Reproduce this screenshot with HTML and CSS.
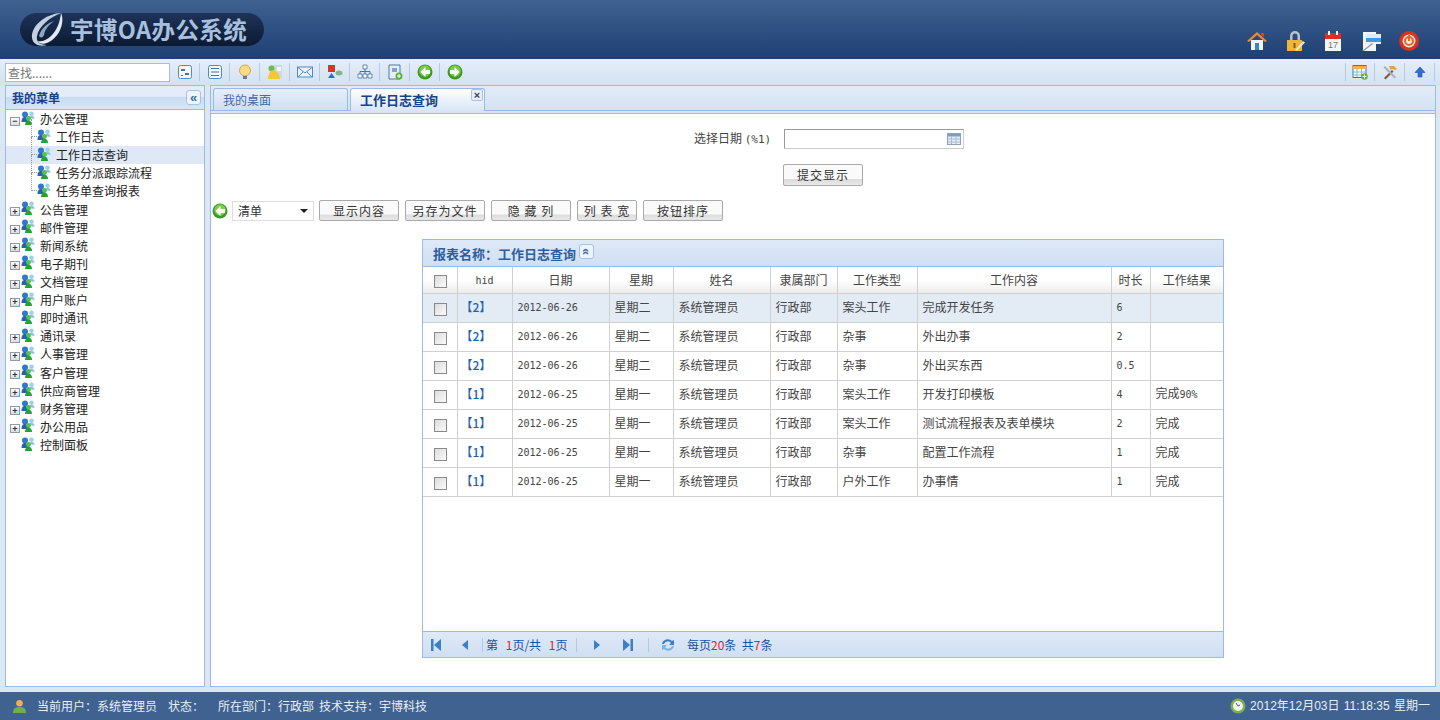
FILE: index.html
```html
<!DOCTYPE html>
<html>
	<head>
		<meta charset="UTF-8">
		<title>宇博OA办公系统</title>
		<link rel="stylesheet" href="styles.css">
	</head>
	<body>
		<svg class="defs" xmlns="http://www.w3.org/2000/svg">
			<symbol id="node" viewBox="0 0 14 14"><circle cx="4" cy="3.500" r="3" fill="#2f78cc"/><path d="M.5 11c0-4 1.500-5 3.500-5s3 1.500 3 5z" fill="#2a62ad"/><circle cx="10.500" cy="2.800" r="2.300" fill="#9fd0ea"/><path d="M8 7c0-1.500 1.500-2 3-2s2.500 1 2.500 3z" fill="#8cc2de"/><circle cx="7.500" cy="7.500" r="2.400" fill="#52c44a"/><path d="M4 14c0-3 1.700-4.500 3.500-4.500S11 11 11 14z" fill="#25a236"/></symbol>
			<symbol id="back" viewBox="0 0 16 16"><circle cx="8" cy="8" r="7.500" fill="#3b9a22"/><circle cx="8" cy="7" r="5.800" fill="#7ccb4f"/><path d="M8.500 3 3.500 8l5 5v-3H13V6H8.500z" fill="#fff"/></symbol>
			<symbol id="forward" viewBox="0 0 16 16"><circle cx="8" cy="8" r="7.500" fill="#3b9a22"/><circle cx="8" cy="7" r="5.800" fill="#7ccb4f"/><path d="M7.500 3 12.500 8l-5 5v-3H3V6h4.500z" fill="#fff"/></symbol>
		</svg>

		<div class="header">
			<div class="logo">
				<svg class="logo-mark" viewBox="0 0 34 36"><path d="M31 1C15 2 1 14 2 26c1 7 8 9 15 7-8 0-11-4-10-9C9 14 19 6 31 1z" fill="#c3d0e1"/><path d="M31 1c4 9-1 23-12 29-5 3-10 2-11-1 4 1 9-1 13-5C27 18 30 10 31 1z" fill="#e2e9f2"/><path d="M9 24c2-8 9-13 15-15-5 4-9 8-10 14-1 3-4 3-5 1z" fill="#8fa6c3"/></svg>
				<span class="logo-text">宇博OA办公系统</span>
			</div>
			<div class="top-icons">
				<svg viewBox="0 0 22 22"><path d="M5 10h12v10H5z" fill="#f1f4f8"/><path d="M9 13h4v7H9z" fill="#3d82cc"/><path d="M1 11 11 2l10 9-2 1-8-7-8 7z" fill="#ee8a2c"/><path d="M15 3h3v4l-3-2z" fill="#d8432b"/></svg>
				<svg viewBox="0 0 22 22"><path d="M6 10V6a5 5 0 0 1 10 0v4h-2.500V6a2.500 2.500 0 0 0-5 0v4z" fill="#b8c2cc"/><path d="M3 10h15v11H3z" fill="#efb43c"/><path d="M9.500 13h2v5h-2z" fill="#8a5a12"/><path d="M11 20l8-9 2 1.500L13 21z" fill="#f4e3c0"/></svg>
				<svg viewBox="0 0 22 22"><path d="M3 3h16v18H3z" fill="#f5f5f5"/><path d="M3 3h16v6H3z" fill="#dc2f25"/><path d="M6 1h2v4H6zM14 1h2v4h-2z" fill="#fff"/><text x="11" y="18" class="cal">17</text></svg>
				<svg viewBox="0 0 22 22"><path d="M3 2h13v19H3z" fill="#f2f5f9"/><path d="M6 4h15v4H6z" fill="#dfeaf5"/><path d="M6 8h15v4H6z" fill="#3f9ae0"/><path d="M6 12h15v2H6z" fill="#e8f1f9"/><path d="M2 21 12 13l1 1L4 21z" fill="#8d9aa8"/></svg>
				<svg viewBox="0 0 22 22"><circle cx="11" cy="11" r="10" fill="#d9321f"/><circle cx="11" cy="11" r="6.500" fill="#f6e7da"/><circle cx="11" cy="11" r="4" fill="none" stroke="#e2682a" stroke-width="2"/><path d="M10 5h2v6h-2z" fill="#e2682a"/></svg>
			</div>
		</div>

		<div class="toolbar">
			<input class="search" type="text" value="查找......">
			<div class="tool-group">
				<span class="tool"><svg viewBox="0 0 16 16"><rect x="1.500" y="1.500" width="13" height="13" rx="2" fill="#f3f8fd" stroke="#4d8cc8"/><path d="M4 5h4v2H4zM8 9h4v2H8zM4 11h2v1H4z" fill="#3c77b4"/></svg></span>
				<span class="tool"><svg viewBox="0 0 16 16"><rect x="1.500" y="1.500" width="13" height="13" rx="2" fill="#f3f8fd" stroke="#4d8cc8"/><path d="M4 4h8v1H4zM4 7.500h8v1H4zM4 11h8v1H4z" fill="#3c77b4"/></svg></span>
				<span class="tool"><svg viewBox="0 0 16 16"><circle cx="8" cy="6.500" r="5.500" fill="#f8dc85" stroke="#d9a441"/><path d="M6 12h4v3H6z" fill="#6e7b87"/></svg></span>
				<span class="tool"><svg viewBox="0 0 16 16"><path d="M4 1h11v13H4z" fill="#c9dbe9"/><path d="M10 3h4v4h-4z" fill="#f2f6fa"/><circle cx="4.500" cy="4.500" r="3" fill="#6dbb4c"/><path d="M4 7c3-2 8 0 9 8H1c0-3 1-6 3-8z" fill="#f2c92f"/></svg></span>
				<span class="tool"><svg viewBox="0 0 16 16"><rect x=".500" y="3" width="15" height="10" fill="#eaf3fb" stroke="#4d8cc8"/><path d="M1 3.500 8 9l7-5.500M1 13l5-5M15 13l-5-5" fill="none" stroke="#4d8cc8"/></svg></span>
				<span class="tool"><svg viewBox="0 0 16 16"><path d="M1 1h7v7H1z" fill="#cf3a2b"/><ellipse cx="12" cy="9" rx="3.500" ry="2.500" fill="#7fb98a"/><path d="M4.500 9 8 14H1z" fill="#2f6fd0"/></svg></span>
				<span class="tool"><svg viewBox="0 0 16 16"><path d="M6 1h4v4H6zM1 10h4v4H1zM6 10h4v4H6zM11 10h4v4h-4z" fill="#f4f7fa" stroke="#4472a8" stroke-width=".8"/><path d="M8 5v5M3 10V7.500h10V10" fill="none" stroke="#4472a8"/></svg></span>
				<span class="tool"><svg viewBox="0 0 16 16"><path d="M2 1h11v14H2z" fill="#e8eef4" stroke="#4f7a9e"/><path d="M5 4h5v4H5z" fill="#7ea7c9"/><circle cx="12" cy="12" r="3.500" fill="#5cb03a"/><path d="M11.500 10h1v1.500H14v1h-1.500V14h-1v-1.500H10v-1h1.500z" fill="#fff"/></svg></span>
				<span class="tool"><svg><use href="#back"/></svg></span>
				<span class="tool"><svg><use href="#forward"/></svg></span>
			</div>
			<div class="tool-group tool-right">
				<span class="tool"><svg viewBox="0 0 16 16"><rect x="1" y="1.500" width="13" height="12" fill="#fff" stroke="#3c77b4"/><path d="M1 2h13v3H1z" fill="#f0b24a"/><path d="M1 8h13M1 11h13M5 5v8M9.500 5v8" stroke="#8fb0cf" fill="none"/><circle cx="12.500" cy="12.500" r="3.200" fill="#5cb03a"/><path d="M12 10.500h1V12h1.500v1H13v1.500h-1V13h-1.500v-1H12z" fill="#fff"/></svg></span>
				<span class="tool"><svg viewBox="0 0 16 16"><path d="m2 14 8-8 1.500 1.500-8 8z" fill="#7a5a3a"/><path d="M7 2h5l3 3-2 1-3-1-1.500 1z" fill="#e8a13a"/><path d="m3 2 11 11-1.500 1.500L1.500 3.500z" fill="#a9b1ba"/></svg></span>
				<span class="tool"><svg viewBox="0 0 16 16"><path d="M8 3 13 8.500H10V13H6V8.500H3z" fill="#2f6fd0" stroke="#1f4f9e" stroke-width=".6"/></svg></span>
				<i class="tool-end"></i>
			</div>
		</div>

		<div class="main">
			<div class="side">
				<div class="side-title"><span>我的菜单</span><i class="collapse">«</i></div>
				<ul class="tree">
					<li><i class="exp">−</i><svg class="node"><use href="#node"/></svg>办公管理</li>
					<li class="sub"><i class="dots"></i><svg class="node"><use href="#node"/></svg>工作日志</li>
					<li class="sub on"><i class="dots"></i><svg class="node"><use href="#node"/></svg>工作日志查询</li>
					<li class="sub"><i class="dots"></i><svg class="node"><use href="#node"/></svg>任务分派跟踪流程</li>
					<li class="sub"><i class="dots"></i><svg class="node"><use href="#node"/></svg>任务单查询报表</li>
					<li><i class="exp">+</i><svg class="node"><use href="#node"/></svg>公告管理</li>
					<li><i class="exp">+</i><svg class="node"><use href="#node"/></svg>邮件管理</li>
					<li><i class="exp">+</i><svg class="node"><use href="#node"/></svg>新闻系统</li>
					<li><i class="exp">+</i><svg class="node"><use href="#node"/></svg>电子期刊</li>
					<li><i class="exp">+</i><svg class="node"><use href="#node"/></svg>文档管理</li>
					<li><i class="exp">+</i><svg class="node"><use href="#node"/></svg>用户账户</li>
					<li><i class="leaf"></i><svg class="node"><use href="#node"/></svg>即时通讯</li>
					<li><i class="exp">+</i><svg class="node"><use href="#node"/></svg>通讯录</li>
					<li><i class="exp">+</i><svg class="node"><use href="#node"/></svg>人事管理</li>
					<li><i class="exp">+</i><svg class="node"><use href="#node"/></svg>客户管理</li>
					<li><i class="exp">+</i><svg class="node"><use href="#node"/></svg>供应商管理</li>
					<li><i class="exp">+</i><svg class="node"><use href="#node"/></svg>财务管理</li>
					<li><i class="exp">+</i><svg class="node"><use href="#node"/></svg>办公用品</li>
					<li><i class="leaf"></i><svg class="node"><use href="#node"/></svg>控制面板</li>
				</ul>
			</div>

			<div class="content">
				<div class="tabs">
					<div class="tab">我的桌面</div>
					<div class="tab tab-on">工作日志查询<i class="tab-close">×</i></div>
				</div>
				<div class="tab-strip"></div>
				<div class="page">
					<div class="form-row">
						<label>选择日期 <span class="mono">(%1)</span></label>
						<div class="date-box">
							<input type="text">
							<svg viewBox="0 0 14 14"><rect x=".500" y="1.500" width="13" height="11" fill="#e4edf6" stroke="#8aa4c0"/><path d="M1 2h12v2.500H1z" fill="#7e9cc0"/><path d="M1 7h12M1 10h12M4.500 4v8M9 4v8" stroke="#a8bdd2"/></svg>
						</div>
					</div>
					<div class="submit-row"><button class="btn btn-wide">提交显示</button></div>
					<div class="action-row">
						<svg class="back"><use href="#back"/></svg>
						<div class="select"><span>清单</span><i class="arrow"></i></div>
						<button class="btn">显示内容</button>
						<button class="btn">另存为文件</button>
						<button class="btn">隐 藏 列</button>
						<button class="btn btn-short">列 表 宽</button>
						<button class="btn">按钮排序</button>
					</div>

					<div class="report">
						<div class="report-title">报表名称：工作日志查询<i class="collapse up">«</i></div>
						<div class="report-body">
							<table>
								<colgroup>
									<col class="c1"><col class="c2"><col class="c3"><col class="c4"><col class="c5"><col class="c6"><col class="c7"><col class="c8"><col class="c9"><col class="c10">
								</colgroup>
								<thead>
									<tr><th class="mid"><i class="check"></i></th><th><span class="mono">hid</span></th><th>日期</th><th>星期</th><th>姓名</th><th>隶属部门</th><th>工作类型</th><th>工作内容</th><th>时长</th><th>工作结果</th></tr>
								</thead>
								<tbody>
									<tr class="hot"><td class="mid"><i class="check"></i></td><td class="hid">【2】</td><td class="mono">2012-06-26</td><td>星期二</td><td>系统管理员</td><td>行政部</td><td>案头工作</td><td>完成开发任务</td><td class="mono">6</td><td></td></tr>
									<tr><td class="mid"><i class="check"></i></td><td class="hid">【2】</td><td class="mono">2012-06-26</td><td>星期二</td><td>系统管理员</td><td>行政部</td><td>杂事</td><td>外出办事</td><td class="mono">2</td><td></td></tr>
									<tr><td class="mid"><i class="check"></i></td><td class="hid">【2】</td><td class="mono">2012-06-26</td><td>星期二</td><td>系统管理员</td><td>行政部</td><td>杂事</td><td>外出买东西</td><td class="mono">0.5</td><td></td></tr>
									<tr><td class="mid"><i class="check"></i></td><td class="hid">【1】</td><td class="mono">2012-06-25</td><td>星期一</td><td>系统管理员</td><td>行政部</td><td>案头工作</td><td>开发打印模板</td><td class="mono">4</td><td>完成<span class="mono">90%</span></td></tr>
									<tr><td class="mid"><i class="check"></i></td><td class="hid">【1】</td><td class="mono">2012-06-25</td><td>星期一</td><td>系统管理员</td><td>行政部</td><td>案头工作</td><td>测试流程报表及表单模块</td><td class="mono">2</td><td>完成</td></tr>
									<tr><td class="mid"><i class="check"></i></td><td class="hid">【1】</td><td class="mono">2012-06-25</td><td>星期一</td><td>系统管理员</td><td>行政部</td><td>杂事</td><td>配置工作流程</td><td class="mono">1</td><td>完成</td></tr>
									<tr><td class="mid"><i class="check"></i></td><td class="hid">【1】</td><td class="mono">2012-06-25</td><td>星期一</td><td>系统管理员</td><td>行政部</td><td>户外工作</td><td>办事情</td><td class="mono">1</td><td>完成</td></tr>
								</tbody>
							</table>
						</div>
						<div class="pager">
							<svg viewBox="0 0 14 14"><path d="M2 1h2.500v12H2z" fill="#3b7fc6"/><path d="M12 1v12L5 7z" fill="#3b7fc6"/></svg>
							<svg class="gap" viewBox="0 0 14 14"><path d="M10 2v10L4 7z" fill="#3b7fc6"/></svg>
							<i class="sep sep-first"></i>
							<span class="page-text">第 <b>1</b>页/共 <b>1</b>页</span>
							<i class="sep"></i>
							<svg class="gap2" viewBox="0 0 14 14"><path d="M4 2v10l6-5z" fill="#3b7fc6"/></svg>
							<svg class="gap3" viewBox="0 0 14 14"><path d="M2 1v12l7-6z" fill="#3b7fc6"/><path d="M9.500 1H12v12H9.500z" fill="#3b7fc6"/></svg>
							<i class="sep sep-far"></i>
							<svg class="refresh" viewBox="0 0 16 16"><path d="M2 7a6 6 0 0 1 10-3l2-1v5H9l2-2a4 4 0 0 0-7 1z" fill="#3b7fc6"/><path d="M14 9a6 6 0 0 1-10 3l-2 1V8h5l-2 2a4 4 0 0 0 7-1z" fill="#7fb2e2"/></svg>
							<span class="page-count">每页<b>20</b>条&nbsp; 共<b>7</b>条</span>
						</div>
					</div>
				</div>
			</div>
		</div>

		<div class="footer">
			<svg class="user" viewBox="0 0 16 16"><circle cx="8" cy="4.500" r="3.500" fill="#f2b04a"/><path d="M1 15c0-5 3-6.500 7-6.500S15 10 15 15z" fill="#6fb04a"/></svg>
			<span class="foot-text">当前用户：系统管理员</span>
			<span class="foot-state">状态：</span>
			<span class="foot-dept">所在部门：行政部</span>
			<span class="foot-tech">技术支持：宇博科技</span>
			<div class="clock">
				<svg viewBox="0 0 16 16"><circle cx="8" cy="8" r="7.500" fill="#7fae52"/><circle cx="8" cy="8" r="5" fill="#f0f3ee"/><path d="M8 8 6 5M8 8l2-1" stroke="#555" fill="none"/></svg>
				<span class="time">2012年12月03日 11:18:35 星期一</span>
			</div>
		</div>
	</body>
</html>
```

FILE: styles.css
```css
* {margin: 0;padding: 0;border: none;box-sizing: border-box;}
ul,li {list-style: none;}
i {font-style: normal;}
body {
	width: 1440px;
	height: 720px;
	overflow: hidden;
	display: flex;
	flex-direction: column;
	background: #dce7f5;
	font: 12px/18px "Noto Sans CJK SC", sans-serif;
	color: #333;
}
.defs {display: none;}
.mono {font-family: "DejaVu Sans Mono", monospace;font-size: 10px;}

/* 顶部 */
.header {
	height: 59px;
	flex: none;
	display: flex;
	justify-content: space-between;
	background: linear-gradient(#3f6291, #1e3f73);
}
.logo {
	width: 244px;
	height: 33px;
	margin: 13px 0 0 20px;
	padding-left: 10px;
	display: flex;
	align-items: center;
	border-radius: 17px;
	background: linear-gradient(#1d3358, #0c1a33);
}
.logo-mark {width: 34px;height: 36px;flex: none;}
.logo-text {
	margin-left: 6px;
	font-size: 23.500px;
	line-height: 33px;
	font-weight: 700;
	letter-spacing: .4px;
	color: #a8c0de;
	white-space: nowrap;
}
.top-icons {
	display: flex;
	gap: 16px;
	padding: 30px 20px 0 0;
}
.top-icons svg {width: 22px;height: 22px;}
.cal {font: 9px "Liberation Sans", sans-serif;text-anchor: middle;fill: #777;}

/* 工具栏 */
.toolbar {
	height: 26px;
	flex: none;
	display: flex;
	align-items: center;
	padding-left: 5px;
	background: linear-gradient(#e6eef8, #d3e1f2);
}
.search {
	width: 165px;
	height: 19px;
	padding-left: 2px;
	border: 1px solid #a9bfd9;
	background: #fff;
	font: 12px "Noto Sans CJK SC", sans-serif;
	color: #777;
}
.tool-group {display: flex;}
.tool-right {margin-left: auto;}
.tool {
	width: 30px;
	height: 18px;
	display: flex;
	align-items: center;
	justify-content: center;
	border-right: 1px solid #b5cbe4;
}
.tool-group:first-of-type .tool:last-child {border-right: none;}
.tool svg {width: 16px;height: 16px;}
.tool-end {width: 5px;}
.tool-right .tool:first-child {border-left: 1px solid #b5cbe4;}

/* 主体 */
.main {
	flex: 1;
	min-height: 0;
	display: flex;
	gap: 5px;
	padding: 0 4px 5px 5px;
}
.side {
	width: 200px;
	flex: none;
	display: flex;
	flex-direction: column;
	border: 1px solid #99bbe8;
	background: #fff;
}
.side-title {
	height: 24px;
	flex: none;
	padding-left: 6px;
	display: flex;
	align-items: center;
	justify-content: space-between;
	border-bottom: 1px solid #99bbe8;
	background: linear-gradient(#e3ecf8 45%, #c9dcf2 50%, #d8e6f6);
	font-weight: 700;
	color: #15428b;
}
.collapse {
	width: 15px;
	height: 15px;
	margin-right: 3px;
	display: flex;
	align-items: center;
	justify-content: center;
	border: 1px solid #a9c2e2;
	border-radius: 3px;
	background: #eef4fb;
	font: 700 13px/12px "Liberation Sans", sans-serif;
	color: #3a6aa5;
}
.up {
	display: inline-flex;
	margin: 0 0 0 3px;
	vertical-align: 4px;
	transform: rotate(90deg);
	font-size: 12px;
}
.tree {color: #222;}
.tree li {
	height: 18.120px;
	display: flex;
	align-items: center;
	padding-left: 4px;
	white-space: nowrap;
}
.exp {
	width: 10px;
	height: 9px;
	margin-top: 4px;
	flex: none;
	display: flex;
	align-items: center;
	justify-content: center;
	border: 1px solid #8c9aaa;
	background: linear-gradient(#fff, #d7dde4);
	font: 700 9px/8px "Liberation Sans", sans-serif;
	color: #333;
}
.leaf {width: 10px;flex: none;}
.node {width: 14px;height: 14px;margin: -3px 5px 0 1px;flex: none;}
.tree .sub {padding-left: 25px;}
.tree .on {background: #dfe8f6;}
.dots {
	width: 6px;
	height: 18px;
	margin-top: -18px;
	flex: none;
	border-left: 1px dotted #999;
	border-bottom: 1px dotted #999;
}
.sub .node {margin: -3px 5px 0 0;}

.content {
	flex: 1;
	min-width: 0;
	display: flex;
	flex-direction: column;
	border: 1px solid #99bbe8;
	background: #fff;
}
.tabs {
	height: 25px;
	flex: none;
	display: flex;
	gap: 2px;
	padding: 2px 0 0 2px;
	border-bottom: 1px solid #99bbe8;
	background: linear-gradient(#e3ecf8, #d4e2f4);
}
.tab-strip {
	height: 3px;
	flex: none;
	border-bottom: 1px solid #99bbe8;
	background: #d8e5f6;
}
.tab {
	width: 135px;
	height: 22px;
	padding-left: 9px;
	border: 1px solid #99bbe8;
	border-bottom: none;
	border-radius: 3px 3px 0 0;
	background: linear-gradient(#e6eff9, #cfdff3);
	line-height: 21px;
	color: #416aa3;
}
.tab-on {
	position: relative;
	height: 23px;
	background: linear-gradient(#fff, #d8e5f6);
	font-size: 13px;
	font-weight: 700;
	color: #15428b;
}
.tab-close {
	position: absolute;
	top: 0;
	right: 1px;
	width: 12px;
	height: 12px;
	display: flex;
	align-items: center;
	justify-content: center;
	border: 1px solid #a9c2e2;
	border-radius: 2px;
	background: #e6eff9;
	font: 700 11px/10px "Liberation Sans", sans-serif;
	color: #445;
}
.page {
	flex: 1;
	min-height: 0;
	display: flex;
	flex-direction: column;
	padding-top: 15px;
}
.form-row {
	height: 20px;
	display: flex;
	align-items: center;
	justify-content: center;
	gap: 12px;
	padding-left: 12px;
	color: #444;
}
.form-row label {width: 78px;white-space: nowrap;}
.form-row .mono {font-size: 11px;}
.date-box {
	width: 180px;
	height: 20px;
	display: flex;
	align-items: center;
	border: 1px solid #999;
	border-bottom-color: #ccc;
	border-right-color: #ccc;
	background: #fff;
}
.date-box input {flex: 1;min-width: 0;height: 16px;}
.date-box svg {width: 14px;height: 14px;margin-right: 2px;}
.submit-row {
	display: flex;
	justify-content: center;
	margin-top: 15px;
}
.btn {
	width: 80px;
	height: 21px;
	border: 1px solid #aaa;
	border-radius: 2px;
	background: linear-gradient(#fafafa 70%, #dcdcdc 72%, #e8e8e8);
	font: 12px/18px "Noto Sans CJK SC", sans-serif;
	letter-spacing: 1px;
	color: #333;
}
.btn-wide {height: 22px;}
.btn-short {width: 60px;}
.action-row {
	height: 21px;
	margin-top: 14px;
	padding-left: 1px;
	display: flex;
	align-items: center;
	gap: 6px;
}
.back {width: 16px;height: 16px;margin-right: -2px;}
.select {
	width: 82px;
	height: 20px;
	margin-right: -1px;
	padding: 0 5px;
	display: flex;
	align-items: center;
	justify-content: space-between;
	border: 1px solid #ddd;
	background: #fff;
	color: #333;
}
.arrow {
	border: 4px solid transparent;
	border-top: 4px solid #222;
	border-bottom: none;
}
.report {
	width: 802px;
	height: 419px;
	margin: 18px auto 0;
	display: flex;
	flex-direction: column;
	border: 1px solid #99bbe8;
}
.report-title {
	height: 27px;
	flex: none;
	padding-left: 10px;
	border-bottom: 1px solid #99bbe8;
	background: linear-gradient(#dfe9f7, #cfdff3);
	font-size: 13px;
	font-weight: 700;
	line-height: 27px;
	color: #2c5f9e;
}
.report-body {flex: 1;min-height: 0;}
table {
	width: 800px;
	border-collapse: collapse;
	table-layout: fixed;
}
.c1 {width: 34px;}
.c2 {width: 55px;}
.c3 {width: 97px;}
.c4 {width: 64px;}
.c5 {width: 97px;}
.c6 {width: 67px;}
.c7 {width: 80px;}
.c8 {width: 194px;}
.c9 {width: 39px;}
.c10 {width: 73px;}
th {
	height: 26px;
	border-right: 1px solid #d0d0d0;
	border-bottom: 1px solid #d0d0d0;
	background: linear-gradient(#fff 50%, #ececec);
	font-weight: 400;
	color: #444;
}
th:last-child, td:last-child {border-right: none;}
td {
	height: 29px;
	padding: 0 0 2px 5px;
	border-right: 1px solid #d0d0d0;
	border-bottom: 1px solid #d0d0d0;
	white-space: nowrap;
	color: #444;
}
td.mono {padding-bottom: 0;}
.hot td {background: #e3ebf5;}
th.mid, td.mid {padding: 0 0 0 2px;text-align: center;}
td.hid {color: #1d62b0;padding-left: 3px;font-weight: 500;}
.check {
	display: inline-block;
	width: 13px;
	height: 13px;
	vertical-align: middle;
	border: 1px solid #8a8a8a;
	background: linear-gradient(135deg, #dcdcdc, #fbfbfb);
}
.pager {
	height: 26px;
	flex: none;
	padding-left: 6px;
	display: flex;
	align-items: center;
	border-top: 1px solid #99bbe8;
	background: linear-gradient(#dfe9f7, #cfdff3);
	color: #15559b;
}
.pager svg {width: 14px;height: 14px;flex: none;}
.pager b {font-weight: 400;color: #e8191c;}
.page-text b {margin-left: 5px;}
.gap {margin-left: 15px;}
.gap2 {margin-left: 13px;}
.gap3 {margin-left: 17px;}
.sep {
	width: 1px;
	height: 14px;
	margin-left: 5px;
	flex: none;
	background: #b3cae6;
}
.sep-first {margin-left: 10px;}
.sep-far {margin-left: 13px;}
.page-text {margin-left: 3px;width: 85px;white-space: nowrap;}
.pager .refresh {width: 16px;height: 16px;margin-left: 11px;}
.page-count {margin-left: 11px;white-space: nowrap;}

/* 底部 */
.footer {
	height: 28px;
	flex: none;
	display: flex;
	align-items: center;
	padding: 0 10px 0 12px;
	background: #3f6290;
	white-space: nowrap;
	color: #e8eef5;
}
.user {width: 15px;height: 15px;flex: none;}
.foot-text {margin-left: 10px;}
.foot-state {margin-left: 11px;}
.foot-dept {margin-left: 14px;}
.foot-tech {margin-left: 5px;}
.clock {margin-left: auto;display: flex;align-items: center;gap: 4px;}
.clock svg {width: 16px;height: 16px;}
.time {font-family: "Liberation Sans", "Noto Sans CJK SC", sans-serif;word-spacing: 1px;}
```
